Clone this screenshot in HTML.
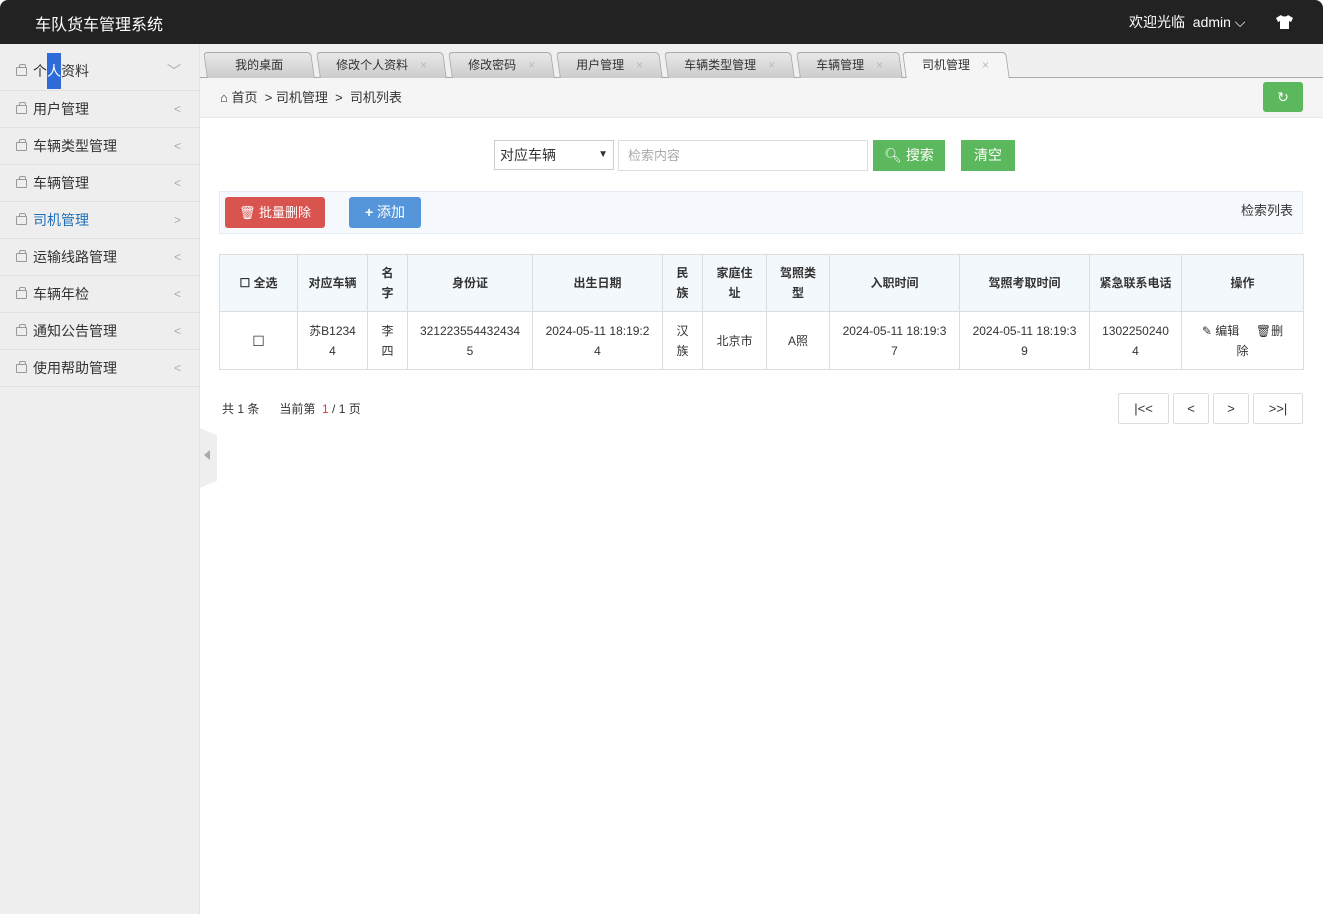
<!DOCTYPE html>
<html><head><meta charset="utf-8"><style>
*{box-sizing:border-box;margin:0;padding:0}
body{width:1323px;height:914px;overflow:hidden;font-family:"Liberation Sans","Noto Sans CJK SC",sans-serif;font-size:13px;color:#333;background:#fff;position:relative}
.hd{position:absolute;left:0;top:0;width:1323px;height:44px;background:#222;border-radius:8px 8px 0 0;color:#fff}
.hd .t{position:absolute;left:35px;top:11px;font-size:16px}
.hd .r{position:absolute;left:1129px;top:12px;font-size:14px}
.sb{position:absolute;left:0;top:44px;width:200px;height:870px;background:#eee;border-right:1px solid #e2e2e2}
.it{position:relative;height:37px;border-bottom:1px solid #e0e0e0;line-height:36px;padding-left:33px;font-size:14px;color:#333}
.it:first-child{height:47px;line-height:54px}
.it .ic{position:absolute;left:16px;top:50%;margin-top:-4px;width:11px;height:9px;border:1px solid #999;border-radius:1px}
.it .ic:before{content:"";position:absolute;left:2px;top:-4px;width:5px;height:3px;border:1px solid #999;border-bottom:none;border-radius:2px 2px 0 0}
.it:first-child .ic{margin-top:0}
.it .ar{position:absolute;right:18px;color:#aaa;font-size:12px}
.tabs{position:absolute;left:200px;top:44px;width:1123px;height:34px;background:#f0f0f0;border-bottom:1px solid #aaa}
.tab{position:absolute;top:8px;height:26px;background:linear-gradient(#e8e8e8,#ccc);border:1px solid #aaa;border-bottom:none;border-radius:4px 4px 0 0;transform:skewX(8deg);font-size:12px;line-height:25px;text-align:center}
.tab span{display:inline-block;transform:skewX(-8deg)}
.tab i{font-style:normal;color:#bbb;margin-left:12px}
.tab.on{background:#f5f5f5;height:27px}
.bc{position:absolute;left:200px;top:78px;width:1123px;height:40px;background:#f5f5f5;border-bottom:1px solid #e5e5e5;font-size:13px;line-height:40px;padding-left:20px}
.rf{position:absolute;right:20px;top:4px;width:40px;height:30px;background:#5cb85c;border-radius:3px;color:#fff;text-align:center;line-height:30px;font-size:14px}
.btn{position:absolute;color:#fff;font-size:13px;text-align:center;border-radius:3px}
table{position:absolute;left:219px;top:254px;width:1084px;border-collapse:collapse;font-size:12px;table-layout:fixed}
td,th{border:1px solid #ddd;text-align:center;line-height:20px;padding:0 4px}
th{background:#f3f8fd;height:57px;font-weight:bold}
td{height:58px}
.pg{position:absolute;top:393px;height:31px;border:1px solid #ddd;border-radius:2px;text-align:center;line-height:29px;font-size:13px}
</style></head><body>
<div class="hd"><div class="t">车队货车管理系统</div><div class="r">欢迎光临 &nbsp;admin ⌵</div>
<svg style="position:absolute;left:1276px;top:15px" width="17" height="14" viewBox="0 0 17 14"><path d="M5 0L0 3l2 4 2-1v8h9V6l2 1 2-4-5-3c-1 2-6 2-7 0z" fill="#fff"/></svg></div>
<div class="sb">
<div class="it"><span class="ic"></span>个<span style="background:#2f6bd8;color:#fff;display:inline-block;line-height:36px">人</span>资料<span class="ar" style="font-size:14px">﹀</span></div>
<div class="it"><span class="ic"></span>用户管理<span class="ar">&lt;</span></div>
<div class="it"><span class="ic"></span>车辆类型管理<span class="ar">&lt;</span></div>
<div class="it"><span class="ic"></span>车辆管理<span class="ar">&lt;</span></div>
<div class="it" style="color:#1e6fb8"><span class="ic"></span>司机管理<span class="ar">&gt;</span></div>
<div class="it"><span class="ic"></span>运输线路管理<span class="ar">&lt;</span></div>
<div class="it"><span class="ic"></span>车辆年检<span class="ar">&lt;</span></div>
<div class="it"><span class="ic"></span>通知公告管理<span class="ar">&lt;</span></div>
<div class="it"><span class="ic"></span>使用帮助管理<span class="ar">&lt;</span></div>
</div>
<div style="position:absolute;left:200px;top:428px;width:17px;height:60px;background:#eee;clip-path:polygon(0 0,100% 12%,100% 88%,0 100%)"><span style="position:absolute;left:4px;top:22px;border:5px solid transparent;border-right:6px solid #aaa;border-left:none;width:0;height:0"></span></div>
<div class="tabs">
<div class="tab" style="left:5px;width:108px"><span>我的桌面</span></div>
<div class="tab" style="left:118px;width:127px"><span>修改个人资料<i>×</i></span></div>
<div class="tab" style="left:250px;width:103px"><span>修改密码<i>×</i></span></div>
<div class="tab" style="left:358px;width:103px"><span>用户管理<i>×</i></span></div>
<div class="tab" style="left:466px;width:127px"><span>车辆类型管理<i>×</i></span></div>
<div class="tab" style="left:598px;width:103px"><span>车辆管理<i>×</i></span></div>
<div class="tab on" style="left:704px;width:104px"><span>司机管理<i>×</i></span></div>
</div>
<div class="bc">⌂ 首页 &nbsp;&gt; 司机管理 &nbsp;&gt; &nbsp;司机列表<div class="rf">↻</div></div>
<div style="position:absolute;left:494px;top:140px;width:120px;height:30px;border:1px solid #ccc;background:#fff;font-size:14px;line-height:28px;padding-left:5px">对应车辆<span style="position:absolute;right:5px;font-size:10px">▼</span></div>
<div style="position:absolute;left:618px;top:140px;width:250px;height:31px;border:1px solid #ddd;color:#aaa;font-size:13px;line-height:29px;padding-left:9px">检索内容</div>
<div class="btn" style="left:873px;top:140px;width:72px;height:31px;line-height:31px;background:#5cb85c;border-radius:0;font-size:14px">🔍︎ 搜索</div>
<div class="btn" style="left:961px;top:140px;width:54px;height:31px;line-height:31px;background:#5cb85c;border-radius:0;font-size:14px">清空</div>
<div style="position:absolute;left:219px;top:191px;width:1084px;height:43px;background:#f5f9fd;border:1px solid #e5ecf3"></div>
<div class="btn" style="left:225px;top:197px;width:100px;height:31px;line-height:31px;background:#d9534f">🗑︎ 批量删除</div>
<div class="btn" style="left:349px;top:197px;width:72px;height:31px;line-height:31px;background:#5596da;font-size:14px"><b>+</b> 添加</div>
<div style="position:absolute;left:1241px;top:200px;font-size:13px">检索列表</div>
<table>
<colgroup><col width="78"><col width="70"><col width="40"><col width="125"><col width="130"><col width="40"><col width="64"><col width="63"><col width="130"><col width="130"><col width="92"><col width="122"></colgroup>
<tr><th>☐ 全选</th><th>对应车辆</th><th>名<br>字</th><th>身份证</th><th>出生日期</th><th>民<br>族</th><th>家庭住<br>址</th><th>驾照类<br>型</th><th>入职时间</th><th>驾照考取时间</th><th>紧急联系电话</th><th>操作</th></tr>
<tr><td style="font-size:14px">☐</td><td>苏B1234<br>4</td><td>李<br>四</td><td>321223554432434<br>5</td><td>2024-05-11 18:19:2<br>4</td><td>汉<br>族</td><td>北京市</td><td>A照</td><td>2024-05-11 18:19:3<br>7</td><td>2024-05-11 18:19:3<br>9</td><td>1302250240<br>4</td><td>✎ 编辑 &nbsp; &nbsp; 🗑︎删<br>除</td></tr>
</table>
<div style="position:absolute;left:222px;top:400px;font-size:12px">共 1 条 &nbsp; &nbsp; &nbsp;当前第 &nbsp;<span style="color:#e33">1</span> / 1 页</div>
<div class="pg" style="left:1118px;width:51px">|&lt;&lt;</div>
<div class="pg" style="left:1173px;width:36px">&lt;</div>
<div class="pg" style="left:1213px;width:36px">&gt;</div>
<div class="pg" style="left:1253px;width:50px">&gt;&gt;|</div>
</body></html>
